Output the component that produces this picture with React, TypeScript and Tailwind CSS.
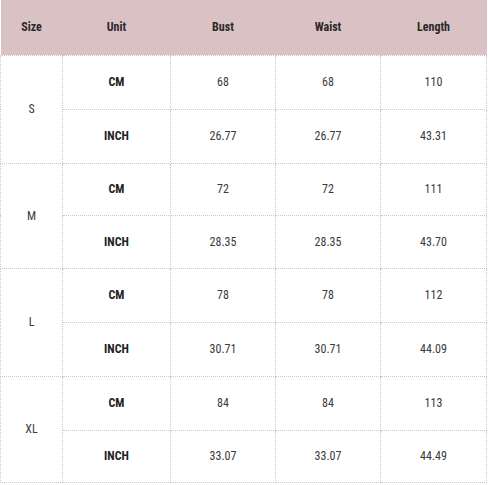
import React from "react";

const rows = [
  { size: "S", cm: ["68", "68", "110"], inch: ["26.77", "26.77", "43.31"], h: ["h-[54px]", "h-[54px]"] },
  { size: "M", cm: ["72", "72", "111"], inch: ["28.35", "28.35", "43.70"], h: ["h-[52px]", "h-[53px]"] },
  { size: "L", cm: ["78", "78", "112"], inch: ["30.71", "30.71", "44.09"], h: ["h-[54px]", "h-[54px]"] },
  { size: "XL", cm: ["84", "84", "113"], inch: ["33.07", "33.07", "44.49"], h: ["h-[54px]", "h-[52px]"] },
];

const font = {
  fontFamily: "'Liberation Sans Narrow', 'Roboto Condensed', 'Liberation Sans', Arial, sans-serif",
};

export default function App() {
  const td = "border border-dotted border-[#c8c8c8] text-center align-middle text-[12px] text-[#3a3a3a]";
  return (
    <div className="w-[488px] h-[485px] bg-white" style={font}>
      <table className="w-[486px] border-collapse table-fixed">
        <colgroup>
          <col className="w-[62px]" />
          <col className="w-[108px]" />
          <col className="w-[105px]" />
          <col className="w-[105px]" />
          <col className="w-[106px]" />
        </colgroup>
        <thead>
          <tr className="h-[55px] bg-[#d9c1c4]">
            {["Size", "Unit", "Bust", "Waist", "Length"].map((h) => (
              <th
                key={h}
                className="border-b border-dotted border-[#c8c8c8] text-center align-middle text-[12px] font-bold text-[#2a2a2a]"
              >
                {h}
              </th>
            ))}
          </tr>
        </thead>
        <tbody>
          {rows.map((r) => (
            <React.Fragment key={r.size}>
              <tr className={r.h[0]}>
                <td rowSpan={2} className={td}>
                  {r.size}
                </td>
                <td className={td + " font-bold text-[#222]"}>CM</td>
                {r.cm.map((v, i) => (
                  <td key={i} className={td}>
                    {v}
                  </td>
                ))}
              </tr>
              <tr className={r.h[1]}>
                <td className={td + " font-bold text-[#222]"}>INCH</td>
                {r.inch.map((v, i) => (
                  <td key={i} className={td}>
                    {v}
                  </td>
                ))}
              </tr>
            </React.Fragment>
          ))}
        </tbody>
      </table>
    </div>
  );
}
